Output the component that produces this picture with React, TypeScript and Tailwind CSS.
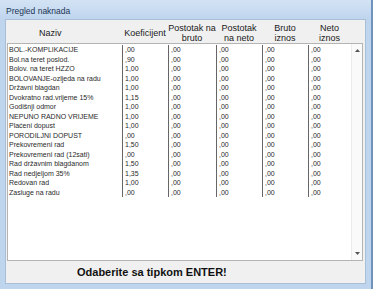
import React from "react";

const rows: [string, string][] = [
  ["BOL.-KOMPLIKACIJE", ",00"],
  ["Bol.na teret poslod.", ",90"],
  ["Bolov. na teret HZZO", "1,00"],
  ["BOLOVANJE-ozljeda na radu", "1,00"],
  ["Državni blagdan", "1,00"],
  ["Dvokratno rad.vrijeme 15%", "1,15"],
  ["Godišnji odmor", "1,00"],
  ["NEPUNO RADNO VRIJEME", "1,00"],
  ["Plaćeni dopust", "1,00"],
  ["PORODILJNI DOPUST", ",00"],
  ["Prekovremeni rad", "1,50"],
  ["Prekovremeni rad (12sati)", ",00"],
  ["Rad državnim blagdanom", "1,50"],
  ["Rad nedjeljom 35%", "1,35"],
  ["Redovan rad", "1,00"],
  ["Zasluge na radu", ",00"],
];

export default function App() {
  return (
    <div className="w-[373px] h-[289px] bg-[#bfd5ee] flex flex-col px-[5px] pb-[5px] font-['Liberation_Sans',Arial,sans-serif] border-r-2 border-[#6f93bb]">
      <div className="h-[19px] flex items-center pt-[3px] text-[8.5px] text-[#1c3556] bg-gradient-to-b from-[#d3e3f4] to-[#bfd5ee] -mx-[5px] px-[6px]">
        Pregled naknada
      </div>
      <div className="flex-1 bg-[#f0f0f0] border border-[#a9bfd8] flex flex-col">
        {/* header */}
        <div className="h-[23px] pt-[2px] flex items-center text-[9px] leading-[10px] text-[#1a1a1a] pl-[2px]">
          <div className="w-[114px] pl-[31px]">Naziv</div>
          <div className="w-[46px] text-center">Koeficijent</div>
          <div className="w-[48px] text-center">Postotak na<br />bruto</div>
          <div className="w-[46px] text-center">Postotak<br />na neto</div>
          <div className="w-[46px] text-center">Bruto<br />iznos</div>
          <div className="w-[43px] text-center">Neto<br />iznos</div>
        </div>
        {/* list box */}
        <div className="ml-[1px] w-[356px] h-[218px] bg-white border border-[#b4b4b4] flex">
          <div className="w-[343px] pt-[1px] text-[7px] leading-[9.5px] text-[#2a2a2a]">
            {rows.map(([name, k]) => (
              <div key={name} className="h-[9.5px] flex">
                <div className="w-[114px] pl-[1px] whitespace-nowrap overflow-hidden">{name}</div>
                <div className="w-[46px] pl-[2px] border-l border-[#666]">{k}</div>
                <div className="w-[48px] pl-[2px] border-l border-[#666]">,00</div>
                <div className="w-[46px] pl-[2px] border-l border-[#666]">,00</div>
                <div className="w-[46px] pl-[2px] border-l border-[#666]">,00</div>
                <div className="w-[43px] pl-[2px] border-l border-[#666]">,00</div>
              </div>
            ))}
          </div>
          <div className="w-[11px] bg-[#fafafa] border-l border-[#ececec] flex flex-col justify-between items-center py-[5px]">
            <svg width="5" height="3" viewBox="0 0 5 3"><path d="M0 3 L2.5 0 L5 3 Z" fill="#555" /></svg>
            <svg width="5" height="3" viewBox="0 0 5 3"><path d="M0 0 L2.5 3 L5 0 Z" fill="#555" /></svg>
          </div>
        </div>
        {/* footer */}
        <div className="flex-1 flex items-center pl-[71px] text-[11px] font-bold text-[#111]">
          Odaberite sa tipkom ENTER!
        </div>
      </div>
    </div>
  );
}
